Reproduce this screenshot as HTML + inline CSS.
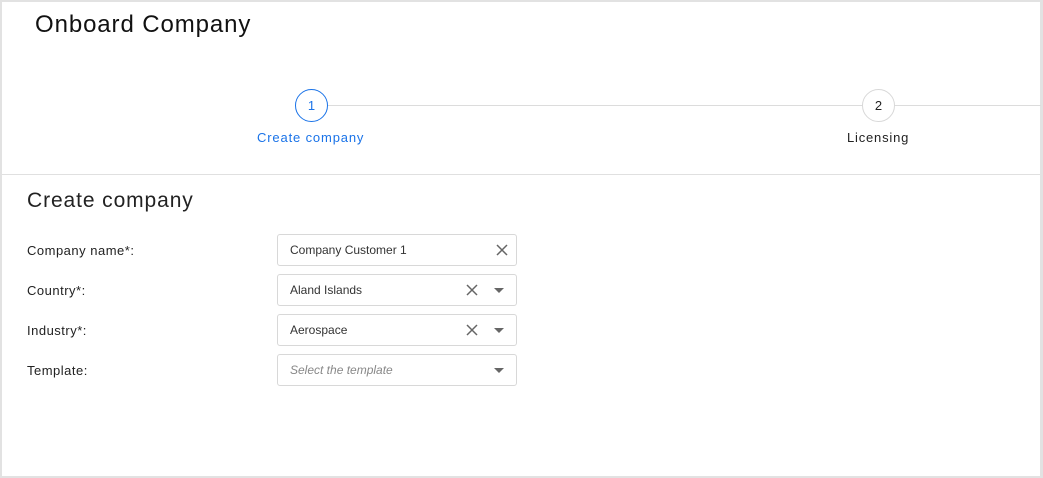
<!DOCTYPE html>
<html><head><style>
*{box-sizing:border-box;margin:0;padding:0}
body{width:1043px;height:478px;background:#fff;font-family:"Liberation Sans",sans-serif;overflow:hidden}
.frame{position:absolute;left:0;top:0;width:1043px;height:478px;border:2px solid #e2e2e2;border-right-width:3px}
.abs{position:absolute}
.title{left:35px;top:11px;font-size:24px;color:#111;letter-spacing:.9px}
.line{height:1px;background:#dcdcdc}
.circ{width:33px;height:33px;border-radius:50%;text-align:center;line-height:31px;font-size:13px;background:#fff}
.lab{font-size:13px;color:#222;letter-spacing:.5px}
.inp{left:277px;width:240px;height:32px;border:1px solid #d8d8d8;border-radius:3px;font-size:12px;color:#333;padding-left:12px;line-height:30px}
.x{position:absolute;top:9px;width:12px;height:12px}
.car{position:absolute;top:13px;right:12px;width:0;height:0;border-left:5px solid transparent;border-right:5px solid transparent;border-top:5px solid #666}
</style></head><body>
<div class="frame"></div>
<div class="abs title">Onboard Company</div>
<div class="abs line" style="left:327px;top:105px;width:714px"></div>
<div class="abs circ" style="left:295px;top:89px;border:1px solid #1a73e8;color:#1a73e8">1</div>
<div class="abs circ" style="left:862px;top:89px;border:1px solid #d8d8d8;color:#222">2</div>
<div class="abs" style="left:257px;top:130px;font-size:13px;color:#1a73e8;letter-spacing:.85px">Create company</div>
<div class="abs" style="left:847px;top:130px;font-size:13px;color:#222;letter-spacing:.8px">Licensing</div>
<div class="abs line" style="left:2px;top:174px;width:1038px;background:#e0e0e0"></div>
<div class="abs" style="left:27px;top:189px;font-size:21px;color:#222;letter-spacing:.9px">Create company</div>
<div class="abs lab" style="left:27px;top:243px">Company name*:</div>
<div class="abs lab" style="left:27px;top:283px">Country*:</div>
<div class="abs lab" style="left:27px;top:323px">Industry*:</div>
<div class="abs lab" style="left:27px;top:363px">Template:</div>
<div class="abs inp" style="top:234px">Company Customer 1<svg class="x" style="right:8px" viewBox="0 0 12 12"><path d="M1 1L11 11M11 1L1 11" stroke="#666" stroke-width="1.5"/></svg></div>
<div class="abs inp" style="top:274px">Aland Islands<svg class="x" style="right:38px" viewBox="0 0 12 12"><path d="M1 1L11 11M11 1L1 11" stroke="#666" stroke-width="1.5"/></svg><div class="car"></div></div>
<div class="abs inp" style="top:314px">Aerospace<svg class="x" style="right:38px" viewBox="0 0 12 12"><path d="M1 1L11 11M11 1L1 11" stroke="#666" stroke-width="1.5"/></svg><div class="car"></div></div>
<div class="abs inp" style="top:354px;font-style:italic;color:#888">Select the template<div class="car"></div></div>
</body></html>
